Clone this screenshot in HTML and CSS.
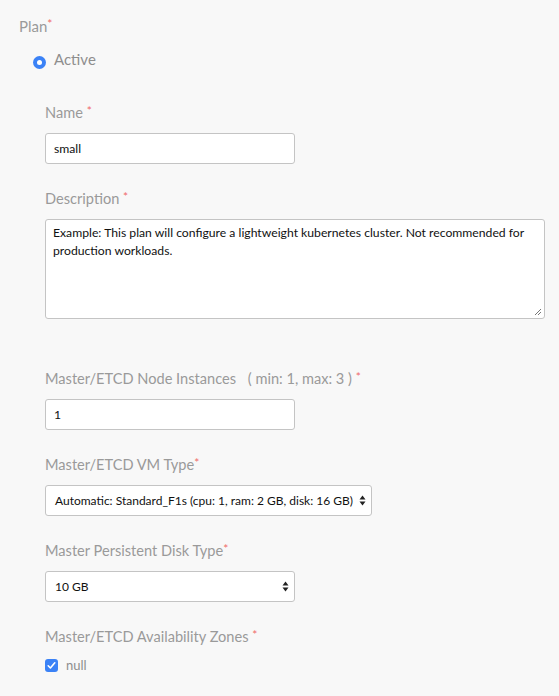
FILE: index.html
```html
<!DOCTYPE html>
<html>
<head>
<meta charset="utf-8">
<link rel="stylesheet" href="styles.css">
</head>
<body>
<div class="form">
  <div class="plan-label">Plan<span class="req">*</span></div>
  <div class="radio-row">
    <span class="radio"></span>
    <span class="radio-text">Active</span>
  </div>
  <div class="fields">
    <div class="field">
      <div class="label">Name <span class="req">*</span></div>
      <div class="input short">small</div>
    </div>
    <div class="field">
      <div class="label">Description <span class="req">*</span></div>
      <div class="textarea">Example: This plan will configure a lightweight kubernetes cluster. Not recommended for production workloads.<svg class="grip" width="8" height="8" viewBox="0 0 8 8"><path d="M7 1L1 7M7 4L4 7" stroke="#777" stroke-width="1" fill="none"/></svg></div>
    </div>
    <div class="field spaced">
      <div class="label">Master/ETCD Node Instances <span class="hint">( min: 1, max: 3 )</span> <span class="req">*</span></div>
      <div class="input short">1</div>
    </div>
    <div class="field">
      <div class="label">Master/ETCD VM Type<span class="req">*</span></div>
      <div class="select wide"><span>Automatic: Standard_F1s (cpu: 1, ram: 2 GB, disk: 16 GB)</span><svg class="arrows" width="7" height="11" viewBox="0 0 7 11"><path d="M3.5 0.5L6.5 4.5H0.5Z M3.5 10.5L6.5 6.5H0.5Z" fill="#222"/></svg></div>
    </div>
    <div class="field">
      <div class="label">Master Persistent Disk Type<span class="req">*</span></div>
      <div class="select short"><span>10 GB</span><svg class="arrows" width="7" height="11" viewBox="0 0 7 11"><path d="M3.5 0.5L6.5 4.5H0.5Z M3.5 10.5L6.5 6.5H0.5Z" fill="#222"/></svg></div>
    </div>
    <div class="field">
      <div class="label">Master/ETCD Availability Zones <span class="req">*</span></div>
      <div class="check-row">
        <span class="checkbox"><svg width="13" height="13" viewBox="0 0 13 13"><path d="M3.2 6.8L5.4 9L9.8 3.8" stroke="#fff" stroke-width="1.6" fill="none" stroke-linecap="round" stroke-linejoin="round"/></svg></span>
        <span class="check-text">null</span>
      </div>
    </div>
  </div>
</div>
</body>
</html>
```

FILE: styles.css
```css
html, body {
  margin: 0;
  padding: 0;
  background: #f8f8f8;
}
body {
  font-family: "Lato", "Open Sans", sans-serif;
  width: 559px;
  height: 696px;
  overflow: hidden;
}
.form {
  padding: 16px 0 0 19px;
}
.plan-label {
  font-size: 15px;
  line-height: 20px;
  color: #9a9a9a;
}
.req {
  color: #f06a6a;
  font-size: 12px;
  vertical-align: top;
  line-height: 16px;
}
.radio-row {
  display: flex;
  align-items: center;
  gap: 8px;
  margin: 16px 0 0 14px;
  height: 20px;
}
.radio {
  width: 13px;
  height: 13px;
  border-radius: 50%;
  background: #3b82f6;
  box-sizing: border-box;
  display: flex;
  align-items: center;
  justify-content: center;
}
.radio::after {
  content: "";
  width: 5px;
  height: 5px;
  border-radius: 50%;
  background: #fff;
}
.radio-text {
  font-size: 15px;
  color: #8e8e8e;
  position: relative;
  top: -3px;
}
.fields {
  padding-left: 26px;
  margin-top: 31px;
  display: flex;
  flex-direction: column;
  gap: 25px;
}
.field.spaced {
  margin-top: 25px;
}
.label {
  font-size: 14.6px;
  line-height: 20px;
  color: #9a9a9a;
  margin-bottom: 10px;
}
.hint {
  margin-left: 8px;
}
.input, .select, .textarea {
  box-sizing: border-box;
  background: #fff;
  border: 1px solid #c4c4c4;
  border-radius: 3px;
  font-size: 12.2px;
  color: #111;
  white-space: nowrap;
}
.input {
  height: 31px;
  line-height: 29px;
  padding: 0 8px;
}
.short { width: 250px; }
.wide { width: 327px; }
.textarea {
  width: 500px;
  height: 100px;
  padding: 4px 7px;
  line-height: 18px;
  position: relative;
  white-space: normal;
}
.grip {
  position: absolute;
  right: 2px;
  bottom: 2px;
}
.select {
  height: 31px;
  display: flex;
  align-items: center;
  justify-content: space-between;
  gap: 3px;
  padding: 0 5px 0 9px;
  font-size: 12px;
}
.arrows { flex: none; }
.check-row {
  display: flex;
  align-items: center;
  gap: 8px;
  margin-top: 0;
}
.checkbox {
  width: 13px;
  height: 13px;
  border-radius: 3px;
  background: #3b82f6;
  display: flex;
}
.check-text {
  font-size: 13px;
  color: #8e8e8e;
}
```
